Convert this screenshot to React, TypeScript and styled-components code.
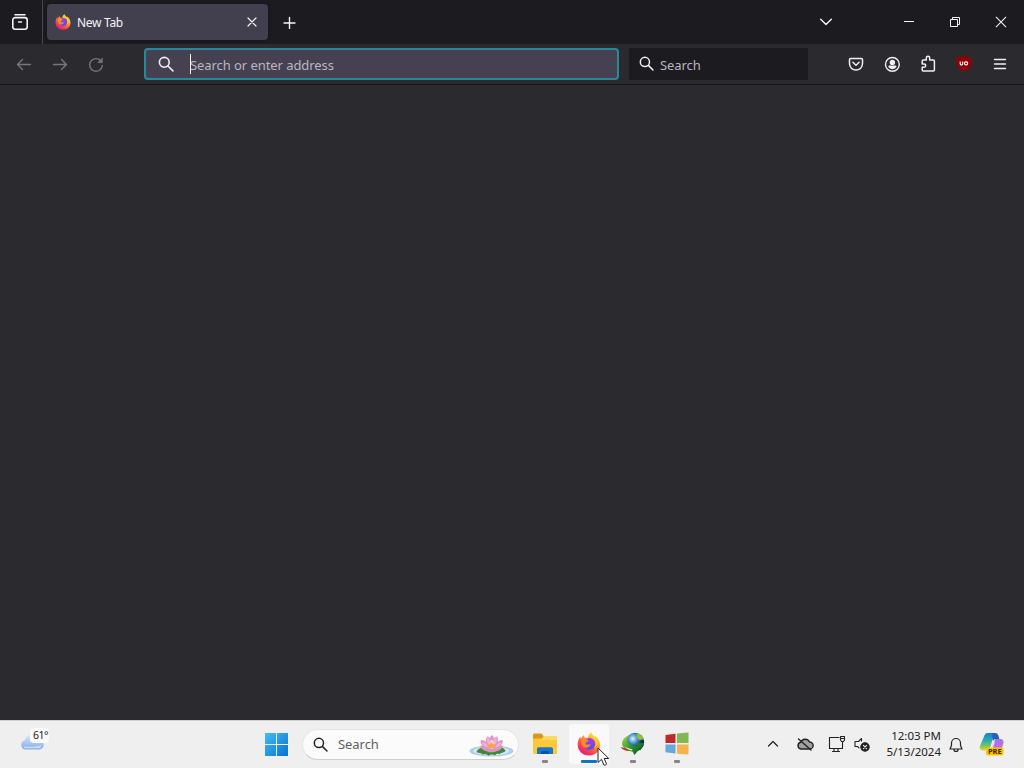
import styled, { createGlobalStyle } from 'styled-components'

const GlobalStyle = createGlobalStyle`
  * {
    box-sizing: border-box;
  }

  body {
    margin: 0;
    overflow: hidden;
    font-family: 'Noto Sans', 'Open Sans', sans-serif;
  }

  svg {
    display: block;
    flex-shrink: 0;
  }
`

const Screen = styled.div`
  position: relative;
  display: flex;
  flex-direction: column;
  width: 1024px;
  height: 768px;
  background: #2b2a2e;
  overflow: hidden;
`

const TabStrip = styled.div`
  display: flex;
  align-items: center;
  height: 44px;
  background: #1c1b20;
  color: #f4f4f6;
`

const FirefoxView = styled.div`
  display: flex;
  align-items: center;
  width: 43px;
  height: 44px;
  padding-left: 11px;
  border-right: 1px solid #48474d;
`

const Tab = styled.div`
  display: flex;
  align-items: center;
  width: 221px;
  height: 36px;
  margin: 0 0 1px 4px;
  padding: 0 11px 0 8px;
  border-radius: 4px;
  background: #42404e;
  box-shadow: 0 0 3px rgba(0, 0, 0, 0.4);
`

const TabTitle = styled.span`
  flex: 1;
  margin-left: 6px;
  padding-top: 2px;
  font-size: 12px;
  line-height: 18px;
  letter-spacing: -0.3px;
`

const StripButton = styled.div<{ $width: number }>`
  display: flex;
  align-items: center;
  justify-content: center;
  width: ${({ $width }) => $width}px;
  height: 44px;
`

const WindowControls = styled.div`
  display: flex;
  margin-left: auto;
`

const NavBar = styled.div`
  display: flex;
  align-items: center;
  height: 41px;
  padding: 0 6px 1px;
  background: #2b2a2f;
  border-bottom: 1px solid #151418;
  color: #f0f0f3;
`

const NavButton = styled.div<{ $dim?: boolean }>`
  display: flex;
  align-items: center;
  justify-content: center;
  width: 36px;
  height: 32px;
  color: ${({ $dim }) => ($dim ? '#77767c' : 'inherit')};
`

const UrlBar = styled.div`
  display: flex;
  align-items: center;
  width: 475px;
  height: 32px;
  margin-left: 30px;
  padding-left: 12px;
  border: 2px solid #28899c;
  border-radius: 4px;
  background: #454151;
`

const Caret = styled.div`
  width: 1px;
  height: 20px;
  margin: 0 -1px 0 16px;
  background: #fff;
`

const Placeholder = styled.span`
  padding-top: 2px;
  font-size: 13px;
  line-height: 18px;
  letter-spacing: -0.07px;
  color: #b9b7c0;
  white-space: nowrap;
`

const SearchBox = styled.div`
  display: flex;
  align-items: center;
  gap: 6px;
  width: 179px;
  height: 32px;
  margin-left: 10px;
  padding-left: 10px;
  background: #1c1b20;
`

const NavActions = styled.div`
  display: flex;
  margin-left: auto;
`

const Page = styled.div`
  flex: 1;
  background: #2b2a2e;
`

const TaskBar = styled.div`
  display: flex;
  align-items: center;
  height: 48px;
  padding-bottom: 1px;
  border-top: 1px solid #d2d2d4;
  background: #efefef;
  color: #222;
`

const Weather = styled.div`
  position: relative;
  width: 265px;
  height: 46px;
  padding: 12px 0 0 19px;
`

const Temperature = styled.span`
  position: absolute;
  left: 30px;
  top: 7px;
  padding: 0 1px 1px 3px;
  border-radius: 4px;
  background: #fafafa;
  font-size: 10.5px;
  line-height: 14px;
  letter-spacing: -0.5px;
  color: #222;
`

const SearchPill = styled.div`
  display: flex;
  align-items: center;
  width: 217px;
  height: 31px;
  margin: 0 6px 0 13px;
  padding: 0 4px 0 10px;
  border: 1px solid #e5e5e5;
  border-bottom-color: #cfcfcf;
  border-radius: 16px;
  background: #fbfbfb;
`

const SearchLabel = styled.span`
  flex: 1;
  margin-left: 10px;
  font-size: 13px;
  line-height: 18px;
  letter-spacing: -0.05px;
  color: #606060;
`

const Apps = styled.div`
  display: flex;
  gap: 4px;
`

const AppButton = styled.div<{ $active?: boolean }>`
  display: flex;
  flex-direction: column;
  align-items: center;
  width: 40px;
  height: 40px;
  padding-top: 8px;
  border-radius: 4px;
  background: ${({ $active }) => ($active ? '#f9f9f9' : 'transparent')};

  &::after {
    content: '';
    width: ${({ $active }) => ($active ? 16 : 6)}px;
    height: 3px;
    margin-top: auto;
    margin-bottom: 1px;
    border-radius: 1px;
    background: ${({ $active }) => ($active ? '#1273c4' : '#858585')};
  }
`

const Tray = styled.div`
  display: flex;
  align-items: center;
  margin-left: auto;
  padding-right: 5px;
`

const TrayIcons = styled.div`
  display: flex;
  align-items: center;
  margin-right: 7px;
`

const TrayItem = styled.div<{ $width: number }>`
  display: flex;
  justify-content: center;
  width: ${({ $width }) => $width}px;
`

const Clock = styled.div`
  width: 62px;
  margin-right: 6px;
  font-size: 11.5px;
  line-height: 16px;
  text-align: right;
  white-space: nowrap;
`

const Pointer = styled.svg`
  position: absolute;
  left: 597px;
  top: 747px;
`

const stroke = {
  fill: 'none',
  stroke: 'currentColor',
  strokeLinecap: 'round' as const,
  strokeLinejoin: 'round' as const,
}

function ViewIcon() {
  return (
    <svg width="18" height="18" viewBox="0 0 18 18" {...stroke} strokeWidth="1.6">
      <path d="M4 1.700h10" />
      <path d="M4.200 4.600h9.600a2.400 2.400 0 0 1 2.400 2.400v6.800a2.400 2.400 0 0 1-2.400 2.400H4.200a2.400 2.400 0 0 1-2.400-2.400V7a2.400 2.400 0 0 1 2.400-2.400z" />
      <path d="M7.600 9h2.800" />
    </svg>
  )
}

function FirefoxLogo({ size, id }: { size: number; id: string }) {
  return (
    <svg width={size} height={size} viewBox="0 0 24 24">
      <defs>
        <linearGradient id={`${id}-body`} x1="20" y1="2" x2="5" y2="23" gradientUnits="userSpaceOnUse">
          <stop offset="0" stopColor="#fff14a" />
          <stop offset=".3" stopColor="#ffb12c" />
          <stop offset=".55" stopColor="#ff6838" />
          <stop offset=".8" stopColor="#f5315d" />
          <stop offset="1" stopColor="#dd1c86" />
        </linearGradient>
        <linearGradient id={`${id}-globe`} x1="12" y1="7" x2="12" y2="18" gradientUnits="userSpaceOnUse">
          <stop offset="0" stopColor="#9b3be8" />
          <stop offset="1" stopColor="#5a50e0" />
        </linearGradient>
      </defs>
      <path
        fill={`url(#${id}-body)`}
        d="M14 .5c1 2.500 3 3.700 4.200 5.400.2-.8.1-1.500-.1-2.200 3.500 2.400 5.400 6 5.100 10C22.800 19.400 18 23.500 12 23.500 5.700 23.500.7 18.800.7 12.700c0-3.400 1-6.200 2.700-8 .1 1 .3 1.600.7 2.300.5-1.800 1.500-3.200 3-4.100-.2 1.100 0 1.900.5 2.600 1.300-.1 2.400 0 3.400.5C11 3.700 12.200 1.800 14 .5z"
      />
      <circle cx="12.300" cy="12" r="6" fill={`url(#${id}-globe)`} />
      <path
        fill="#ff8a2d"
        d="M4.500 8c2-1.500 4-1.600 5.800-.6L11.800 9c-1 .9-2.300.8-3 1.600-.6 1 0 2 1.200 2.200 1.200.2 2.200-.8 3.500-.3-.8 2.300-3.100 3.700-5.600 3.100C5.500 14.800 4 11.500 4.500 8z"
      />
      <path fill="#ffca34" d="M14 .5c.3 4.200 4.600 5.200 4.800 10.200.1 2-.7 4.300-2 5.700 3.200-1.100 4.500-5.200 3.500-8.400C19 4.500 15.400 3.800 14 .5z" />
    </svg>
  )
}

function Close({ size = 10, width = 1.2 }: { size?: number; width?: number }) {
  return (
    <svg width={size} height={size} viewBox="0 0 10 10" {...stroke} strokeWidth={width}>
      <path d="M1 1l8 8M9 1L1 9" />
    </svg>
  )
}

function Magnifier({ size = 16 }: { size?: number }) {
  return (
    <svg width={size} height={size} viewBox="0 0 16 16" {...stroke} strokeWidth="1.6">
      <circle cx="6.300" cy="6.300" r="4.900" />
      <path d="M10 10l4.900 4.900" />
    </svg>
  )
}

function Arrow({ flip }: { flip?: boolean }) {
  return (
    <svg width="16" height="16" viewBox="0 0 16 16" {...stroke} strokeWidth="1.400">
      <path d={flip ? 'M1.500 8.500h13M9.500 3.500l5 5-5 5' : 'M14.500 8.500h-13M6.500 3.500l-5 5 5 5'} />
    </svg>
  )
}

function Reload() {
  return (
    <svg width="16" height="16" viewBox="0 0 16 16" {...stroke} strokeWidth="1.400">
      <path d="M12.700 4.700A6.300 6.300 0 1 0 14.300 9.500" />
      <path d="M14.400 2.200v4.500H9.900z" fill="currentColor" strokeWidth=".6" />
    </svg>
  )
}

function Pocket() {
  return (
    <svg width="16" height="16" viewBox="0 0 16 16" {...stroke} strokeWidth="1.500">
      <path d="M2.700 2.400h10.600c.8 0 1.200.5 1.200 1.200v4a6.500 6.500 0 0 1-13 0v-4c0-.7.4-1.200 1.200-1.200z" />
      <path d="M4.900 6.300L8 9.200l3.100-2.900" />
    </svg>
  )
}

function Account() {
  return (
    <svg width="16" height="16" viewBox="0 0 16 16" {...stroke} strokeWidth="1.400">
      <circle cx="8.400" cy="8.400" r="6.900" />
      <circle cx="8.400" cy="6.400" r="2.700" fill="currentColor" stroke="none" />
      <path fill="currentColor" stroke="none" d="M4.200 10.800c.2-.8.800-1.300 1.600-1.300H11c.8 0 1.400.5 1.600 1.300a5 5 0 0 1-4.200 2.500 5 5 0 0 1-4.200-2.500z" />
    </svg>
  )
}

function Extensions() {
  return (
    <svg width="16" height="17" viewBox="0 0 16 17" {...stroke} strokeWidth="1.500">
      <path d="M6.300 5V3a1.700 1.700 0 0 1 3.400 0v2h3.700c.6 0 1 .4 1 1v9c0 .6-.4 1-1 1H3.200c-.6 0-1-.4-1-1v-2.800h1.900a1.600 1.600 0 0 0 0-3.200H2.200V6c0-.6.4-1 1-1z" />
    </svg>
  )
}

function Shield() {
  return (
    <svg width="16" height="17" viewBox="0 0 16 17">
      <path fill="#900007" d="M8 .5c2.100 1.500 4.600 2.100 7.500 2.100V8c0 4.200-3.200 6.700-7.500 8.500C3.700 14.700.5 12.200.5 8V2.600C3.400 2.600 5.900 2 8 .5z" />
      <path fill="none" stroke="#fff" strokeWidth="1.100" d="M4.200 6.500v2.200c0 1.800 2.500 1.800 2.500 0V6.500" />
      <rect x="8.600" y="6.900" width="3" height="3" rx="1.200" fill="none" stroke="#fff" strokeWidth="1.100" />
    </svg>
  )
}

function Folder() {
  return (
    <svg width="26" height="24" viewBox="0 0 26 24">
      <path fill="#d89a16" d="M1 3c0-1 .6-1.600 1.500-1.600h7L12 4.500V9H1z" />
      <path fill="#fbc83a" d="M1 6.600h8.700L12 4h12c.7 0 1 .5 1 1.200v15.600c0 .8-.5 1.200-1.200 1.200H2.200C1.500 22 1 21.500 1 20.800z" />
      <path fill="#ffda62" d="M12 4h12c.7 0 1 .5 1 1.200v3H9.600z" />
      <path fill="#1479c8" d="M5 22v-5c0-1 .7-1.700 1.700-1.700h12.600c1 0 1.700.7 1.700 1.700v5z" />
      <path fill="#0755a2" d="M9 22v-2.200c0-.5.300-.8.800-.8h6.400c.5 0 .8.300.8.800V22z" />
    </svg>
  )
}

function Globe() {
  return (
    <svg width="26" height="24" viewBox="0 0 26 24">
      <defs>
        <radialGradient id="globe-sea" cx=".38" cy=".32" r=".7">
          <stop offset="0" stopColor="#e2f5ff" />
          <stop offset=".35" stopColor="#4a93cb" />
          <stop offset=".75" stopColor="#09285c" />
          <stop offset="1" stopColor="#03132f" />
        </radialGradient>
        <linearGradient id="globe-arrow" x2="1" y2=".8">
          <stop stopColor="#a9dc43" />
          <stop offset=".5" stopColor="#2f9a28" />
          <stop offset="1" stopColor="#07591c" />
        </linearGradient>
      </defs>
      <circle cx="15" cy="10" r="9.200" fill="url(#globe-sea)" />
      <path fill="#8abf3f" d="M17 1.300c3.500.6 6 3 6.700 5.700-1.500 1.500-2.600 0-3.900 1.300-1.200-1.400-2.800-1.600-3.300-3.800z" />
      <path fill="url(#globe-arrow)" d="M2 12c0-4 3-7.700 7.500-8.500C6.500 6.500 6.500 10 10 12.500c2.500 1.500 5 1.700 7 1l-.8-1.500 8-1.500-3.700 8-1-1.800L14.500 23l-2-3.500C7 19 2.500 16 2 12z" />
      <path fill="#f3f2d6" d="M4.500 14c2 1.700 4.500 2.900 8 3.200l-.7 1.300C8.500 18 6 16.500 4.500 14z" />
      <path fill="#c6301f" d="M.5 15l4.500 1.300 4.500 2.200-1.500.5C5 18.500 2 17.300.5 15z" />
    </svg>
  )
}

function WindowsFlag() {
  return (
    <svg width="24" height="24" viewBox="0 0 24 24">
      <path fill="#bd292d" d="M.500 3l10-1.300v9.300H.5z" />
      <path fill="#82b852" d="M12 1.500L23.500.500V11H12z" />
      <path fill="#66a8db" d="M.5 12.500h10v9L.5 20.300z" />
      <path fill="#f5b34f" d="M12 12.500h11.500v10L12 21.700z" />
    </svg>
  )
}

function Lotus() {
  return (
    <svg width="46" height="26" viewBox="0 0 46 26">
      <ellipse cx="23.500" cy="20" rx="22" ry="5.600" fill="#b0cde8" />
      <ellipse cx="23.500" cy="20" rx="18" ry="4.200" fill="#d3e7f5" />
      <path fill="#46863a" d="M8.500 21c1.500-4.500 7-5.500 12-5h8c4-.4 8 .5 9 4-2 2-5 1.500-6 3.200-2-.6-3-.5-4.500 1.300-2-1.700-4.500-1-6.500.2-2-1.500-3.500-1.500-6-1.200-1-1.600-4-1.400-6-2.500z" />
      <path fill="#dd93c6" d="M12.500 9.500c2.500-.5 4 0 5.500 1.500-.3-2 .2-3.700 1-5.500 1.500.3 2.400.9 3 1.800.5-1.600 1.200-2.600 2-3.300 1.100.9 1.700 2 2 3.300.8-.9 1.800-1.500 3.300-1.800.7 2 .8 3.700.4 5.500 1.600-1.500 3.300-2 5.300-1.500-.5 2.500-1 3.600-2 5 1 0 2 .2 2.500.5-2 3-4 4.500-6.500 5-3 1.700-8 1.700-11 0-2.600-.5-4.500-2-6-5l2.500-.5c-1.300-1.400-2-3-2-5z" />
      <path fill="#efb1d6" d="M19 6c3 2 4 4.500 4.500 8 .5-4 2-6.500 5-8 .8 5-.5 8.500-4.500 11-4-2.500-6-6-5-11zM14 11c3.300.3 5.500 2 6.500 5.500-4-.5-6-2.300-6.500-5.500zM33.500 11c-3 .3-5.300 2-6.300 5.500 4-.5 5.800-2.300 6.300-5.500z" />
      <path fill="#f9d0dd" d="M23.800 8c2 2.800 2.700 6 1.700 10H22c-1.300-3.700-.5-7.200 1.800-10z" />
      <path fill="#f5a54a" d="M18.500 13l3 .5 1.700-2.200 2 2.200 3-.5-2.200 4.500h-5z" />
    </svg>
  )
}

function Copilot() {
  return (
    <svg width="26" height="26" viewBox="0 0 26 26">
      <defs>
        <linearGradient id="copilot-left" x1="0" y1="0" x2="0" y2="1">
          <stop stopColor="#2378c5" />
          <stop offset=".4" stopColor="#25aabc" />
          <stop offset=".75" stopColor="#78c855" />
          <stop offset="1" stopColor="#f1cf3b" />
        </linearGradient>
        <linearGradient id="copilot-right" x1="0" y1="0" x2="0" y2="1">
          <stop stopColor="#9c7bee" />
          <stop offset=".5" stopColor="#c66dda" />
          <stop offset="1" stopColor="#ee5e92" />
        </linearGradient>
      </defs>
      <path fill="url(#copilot-right)" d="M16 8h5c3 0 4 2 3.400 4.500l-2 6c-.8 2.700-2.400 3.500-5 3.500h-6z" />
      <path fill="url(#copilot-left)" d="M9 2h7l-3 8.500-2 6.500c-.7 2-1.500 2.500-3.500 2.500h-3c-3 0-4.300-2-3.500-4.500L5 5.500C5.800 3 7 2 9 2z" />
      <path fill="#2460b4" d="M13 2h3c2 0 3 1 3.500 3l.8 3H17c-1.500 0-2.500.5-3 2z" />
      <path fill="#e9dcf5" d="M14 10.500h2l-2 6.500h-2z" />
      <rect x="7" y="16.500" width="17.500" height="8" rx="2" fill="#ffc400" />
      <text x="15.800" y="23.200" textAnchor="middle" fontFamily="Noto Sans, sans-serif" fontSize="7.500" fontWeight="700" fill="#332400">
        PRE
      </text>
    </svg>
  )
}

export default function App() {
  return (
    <Screen>
      <GlobalStyle />
      <TabStrip>
        <FirefoxView>
          <ViewIcon />
        </FirefoxView>
        <Tab>
          <FirefoxLogo size={16} id="tab" />
          <TabTitle>New Tab</TabTitle>
          <Close />
        </Tab>
        <StripButton $width={43}>
          <svg width="13" height="13" viewBox="0 0 13 13" {...stroke} strokeWidth="1.400">
            <path d="M6.500 1.500v11M1 7h11" />
          </svg>
        </StripButton>
        <WindowControls>
          <StripButton $width={120}>
            <svg width="12" height="8" viewBox="0 0 12 8" {...stroke} strokeWidth="1.400">
              <path d="M.7 1.200L6 6.500l5.300-5.300" />
            </svg>
          </StripButton>
          <StripButton $width={46}>
            <svg width="10" height="2" viewBox="0 0 10 2">
              <path d="M0 0h10v1H0z" fill="currentColor" />
            </svg>
          </StripButton>
          <StripButton $width={46}>
            <svg width="10" height="10" viewBox="0 0 10 10" fill="none" stroke="currentColor">
              <path d="M.5 2.500h7v7h-7zM2.500 2.500v-2h7v7h-2" />
            </svg>
          </StripButton>
          <StripButton $width={46}>
            <Close size={12} width={0.9} />
          </StripButton>
        </WindowControls>
      </TabStrip>

      <NavBar>
        <NavButton $dim>
          <Arrow />
        </NavButton>
        <NavButton $dim>
          <Arrow flip />
        </NavButton>
        <NavButton $dim>
          <Reload />
        </NavButton>
        <UrlBar>
          <Magnifier />
          <Caret />
          <Placeholder>Search or enter address</Placeholder>
        </UrlBar>
        <SearchBox>
          <Magnifier size={15} />
          <Placeholder>Search</Placeholder>
        </SearchBox>
        <NavActions>
          <NavButton>
            <Pocket />
          </NavButton>
          <NavButton>
            <Account />
          </NavButton>
          <NavButton>
            <Extensions />
          </NavButton>
          <NavButton>
            <Shield />
          </NavButton>
          <NavButton>
            <svg width="14" height="12" viewBox="0 0 14 12" {...stroke} strokeWidth="1.400">
              <path d="M1.500 1.500h11M1.500 6h11M1.500 10.500h11" />
            </svg>
          </NavButton>
        </NavActions>
      </NavBar>

      <Page />

      <TaskBar>
        <Weather>
          <svg width="28" height="18" viewBox="0 0 28 19">
            <defs>
              <linearGradient id="cloud" x2="0" y2="1">
                <stop stopColor="#dce9fb" />
                <stop offset="1" stopColor="#83ace5" />
              </linearGradient>
            </defs>
            <path fill="url(#cloud)" d="M6 17.500a5 5 0 0 1-.7-9.800C6 4 9 1.500 12.500 1.500c4 0 7 2.300 7.800 6a5 5 0 0 1 .2 10z" />
            <path fill="#c5dbf8" d="M4 14c5 1 12 1 19-1.200-.5 2.200-1.500 3.200-3 3.200H6c-1 0-1.700-.7-2-2z" />
          </svg>
          <Temperature>61°</Temperature>
        </Weather>
        <svg width="24" height="24" viewBox="0 0 24 24">
          <defs>
            <linearGradient id="start" x2="1" y2="1">
              <stop stopColor="#42bdf3" />
              <stop offset="1" stopColor="#0871d2" />
            </linearGradient>
          </defs>
          <path fill="url(#start)" d="M0 1h11v11H0zM12 1h11v11H12zM0 13h11v11H0zM12 13h11v11H12z" />
        </svg>
        <SearchPill>
          <Magnifier size={15} />
          <SearchLabel>Search</SearchLabel>
          <Lotus />
        </SearchPill>
        <Apps>
          <AppButton>
            <Folder />
          </AppButton>
          <AppButton $active>
            <FirefoxLogo size={24} id="taskbar" />
          </AppButton>
          <AppButton>
            <Globe />
          </AppButton>
          <AppButton>
            <WindowsFlag />
          </AppButton>
        </Apps>
        <Tray>
          <TrayIcons>
            <TrayItem $width={32}>
              <svg width="12" height="8" viewBox="0 0 12 8" {...stroke} strokeWidth="1.200">
                <path d="M1.500 6L6 1.500 10.500 6" />
              </svg>
            </TrayItem>
            <TrayItem $width={32}>
              <svg width="18" height="16" viewBox="0 0 18 16" {...stroke} strokeWidth="1.400">
                <path fill="#a0a0a0" d="M5 13a3.400 3.400 0 0 1-.3-6.700A4.800 4.800 0 0 1 13.500 6a3.500 3.500 0 0 1 .3 7z" />
                <path d="M2.500 3L15 14" />
              </svg>
            </TrayItem>
            <TrayItem $width={31}>
              <svg width="18" height="18" viewBox="0 0 18 18" {...stroke} strokeWidth="1.100">
                <path d="M11 2.500H1.500v11h13V9M6 13.500v3M10 13.500v3M4.500 16.500h7" />
                <path d="M12.500 1.500h4v3.500l-1 1.500h-2l-1-1.500zM14.500 6.500v3M12.500 3.500h4" />
              </svg>
            </TrayItem>
            <TrayItem $width={20}>
              <svg width="18" height="16" viewBox="0 0 18 16" {...stroke} strokeWidth="1.100">
                <path d="M8.500 5V2.500L5.500 5.500H2v5h2.500L6 11.800" />
                <circle cx="12" cy="11" r="4.200" fill="#222" />
                <path d="M10.400 9.400l3.200 3.200M13.600 9.400l-3.200 3.200" stroke="#efefef" />
              </svg>
            </TrayItem>
          </TrayIcons>
          <Clock>
            <div>12:03 PM</div>
            <div>5/13/2024</div>
          </Clock>
          <TrayItem $width={18}>
            <svg width="16" height="17" viewBox="0 0 16 17" {...stroke} strokeWidth="1.200">
              <path d="M2 13l1.500-3.500V7a4.500 4.500 0 0 1 9 0v2.500L14 13zM6 13.500a2 2 0 0 0 4 0" />
            </svg>
          </TrayItem>
          <TrayItem $width={54}>
            <Copilot />
          </TrayItem>
        </Tray>
      </TaskBar>

      <Pointer width="14" height="21" viewBox="0 0 14 21">
        <path
          fill="#fff"
          stroke="#222"
          strokeLinejoin="round"
          d="M1 1v14.500l3.500-3.200 2.400 5.700c1 .6 2.500-.1 2.600-1.100L7.200 11.500h4.600z"
        />
      </Pointer>
    </Screen>
  )
}
